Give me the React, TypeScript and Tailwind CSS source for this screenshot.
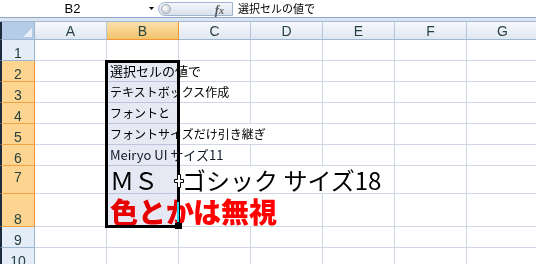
import type { ReactNode } from 'react'

const sans = "font-['Liberation_Sans',Arial,sans-serif]"
const jp = "font-['Noto_Sans_CJK_JP','Noto_Sans',sans-serif]"

type Row = {
  n: number
  h: string
  sel?: boolean
  text?: ReactNode
  span?: number
  w?: string
  cls?: string
  hd?: string
}

const rows: Row[] = [
  { n: 1, h: 'h-[21px]' },
  { n: 2, h: 'h-[21px]', sel: true, text: '選択セルの値で', span: 2, w: 'w-[144px]', cls: 'text-[13px] text-black pb-[4px]' },
  { n: 3, h: 'h-[21px]', sel: true, text: 'テキストボックス作成', span: 2, w: 'w-[144px]', cls: 'text-[12px] text-black pb-[4px]' },
  { n: 4, h: 'h-[21px]', sel: true, text: 'フォントと', span: 1, w: 'w-[72px]', cls: 'text-[12px] text-black pb-[4px]' },
  { n: 5, h: 'h-[21px]', sel: true, text: 'フォントサイズだけ引き継ぎ', span: 3, w: 'w-[216px]', cls: 'text-[12px] text-black pb-[4px]' },
  { n: 6, h: 'h-[21px]', sel: true, text: 'Meiryo UI サイズ11', span: 2, w: 'w-[144px]', cls: 'text-[13px] text-[#111827] pb-[4px]' },
  { n: 7, h: 'h-[28px]', sel: true, text: 'ＭＳ　ゴシック サイズ18', span: 4, w: 'w-[288px]', cls: 'text-[24px] text-black pb-[1px]', hd: 'pb-[9px]' },
  { n: 8, h: 'h-[33px]', sel: true, text: '色とかは無視', span: 3, w: 'w-[216px]', cls: 'text-[28px] font-black text-[#ff0000] pb-[1px]' },
  { n: 9, h: 'h-[21px]' },
  { n: 10, h: 'h-[21px]' },
]

const cols = ['A', 'B', 'C', 'D', 'E', 'F', 'G']

function GridRow({ row }: { row: Row }) {
  const rest = 7 - 1 - (row.span ?? 1)
  return (
    <div className={`flex ${row.h}`}>
      <div
        className={`w-[35px] shrink-0 flex items-end justify-center border-l-2 border-l-[#1d2b3e] border-r border-b text-[14px] leading-none text-[#27413e] ${sans} ${
          row.sel ? 'bg-[#fdd591] border-r-[#f29536] border-b-[#f0a247]' : 'bg-[#e4ecf7] border-r-[#9eb6ce] border-b-[#9eb6ce]'
        } ${row.hd ?? 'pb-0'}`}
      >
        {row.n}
      </div>
      <div className="w-[72px] shrink-0 border-r border-b border-[#d0d7e5]" />
      <div
        className={`${row.w ?? 'w-[72px]'} shrink-0 flex items-end pl-[3px] border-r border-b border-[#d0d7e5] whitespace-nowrap overflow-hidden leading-none ${jp} ${row.cls ?? ''}`}
      >
        {row.text}
      </div>
      {Array.from({ length: rest }).map((_, i) => (
        <div key={i} className="w-[72px] shrink-0 border-r border-b border-[#d0d7e5]" />
      ))}
    </div>
  )
}

export default function App() {
  return (
    <div className="relative w-[536px] h-[264px] overflow-hidden bg-white">
      {/* formula bar */}
      <div className="flex h-[18px] border-b border-[#8ea6c5] bg-white">
        <div className="w-[158px] flex items-center shrink-0">
          <span className={`w-[145px] text-center text-[13px] leading-none text-black ${sans}`}>B2</span>
          <svg width="5" height="3" viewBox="0 0 5 3" className="ml-[4px]">
            <path d="M0 0 H5 L2.5 3 Z" fill="#000" />
          </svg>
        </div>
        <div className="mt-[2px] h-[14px] w-[75px] shrink-0 flex items-center rounded-l-full border border-[#9fb4cf] bg-gradient-to-b from-[#f4f7fb] to-[#d7e0ec]">
          <div className="ml-[2px] w-[10px] h-[10px] rounded-full border border-[#a3aab5] bg-[radial-gradient(circle_at_35%_35%,#ffffff,#b9c0ca)]" />
          <span className="ml-auto mr-[8px] font-['Liberation_Serif',serif] italic font-bold text-[13px] leading-none text-[#5b5b5b]">
            f<span className="text-[10px]">x</span>
          </span>
        </div>
        <div className={`flex-1 pl-[5px] flex items-center text-[11px] leading-none text-black ${jp}`}>選択セルの値で</div>
      </div>
      <div className="h-[4px] bg-[#dbe5f2] border-b border-[#a3b7d2]" />

      {/* column headers */}
      <div className="flex h-[18px]">
        <div className="w-[35px] shrink-0 relative border-l-2 border-l-[#1d2b3e] border-r border-b border-[#9eb6ce] bg-[#b5cce9]">
          <svg width="9" height="9" viewBox="0 0 9 9" className="absolute right-[2px] bottom-[2px]">
            <path d="M9 0 V9 H0 Z" fill="#e6edf6" />
          </svg>
        </div>
        {cols.map(c => (
          <div
            key={c}
            className={`w-[72px] shrink-0 flex items-center justify-center border-r border-b text-[14px] leading-none text-[#27413e] ${sans} ${
              c === 'B'
                ? 'bg-gradient-to-b from-[#fae0ab] to-[#f2c46a] border-[#f29536]'
                : 'bg-gradient-to-b from-[#f7f9fc] to-[#dfe7f2] border-r-[#b3c5da] border-b-[#9eb6ce]'
            }`}
          >
            {c}
          </div>
        ))}
      </div>

      {rows.map(r => (
        <GridRow key={r.n} row={r} />
      ))}

      {/* selection B2:B8 */}
      <div className="absolute left-[105px] top-[60px] w-[75px] h-[168px] border-[3px] border-black bg-[#e6e9f4] mix-blend-multiply pointer-events-none" />
      <div className="absolute left-[175px] top-[223px] w-[7px] h-[6px] bg-black" />
      <div className="absolute left-[177px] top-[202px] w-[2px] h-[20px] bg-[#2ad4e8]" />
      {/* cursor */}
      <svg width="10" height="14" viewBox="0 0 10 14" className="absolute left-[174px] top-[174px]">
        <path d="M3.5 0.5 H6.5 V5.5 H9.5 V8.5 H6.5 V13.5 H3.5 V8.5 H0.5 V5.5 H3.5 Z" fill="#fff" stroke="#000" strokeWidth="1" />
      </svg>
    </div>
  )
}
